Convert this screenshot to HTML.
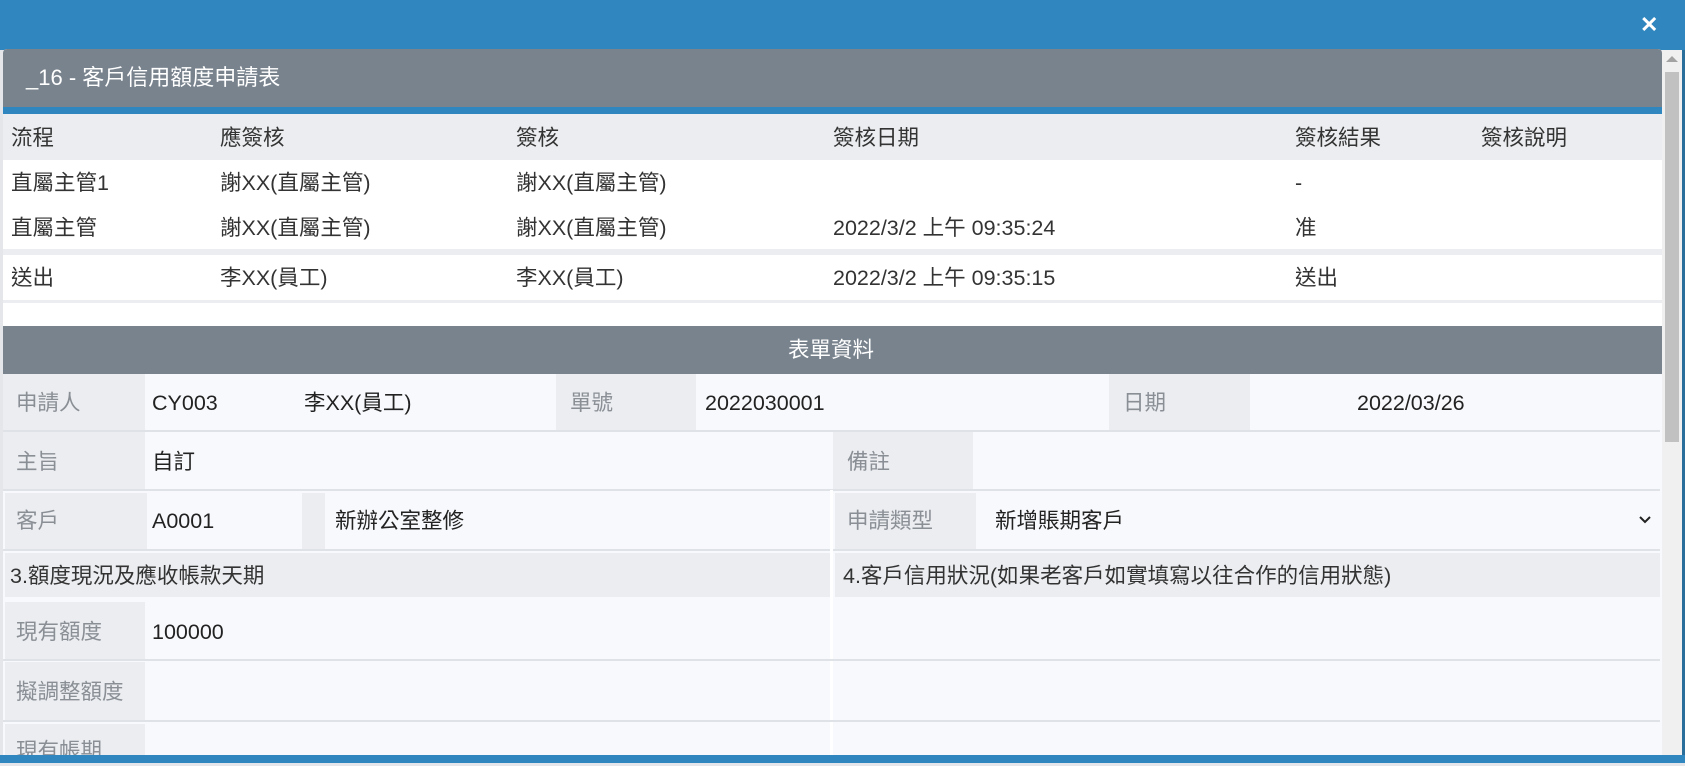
<!DOCTYPE html>
<html><head><meta charset="utf-8"><style>
*{margin:0;padding:0;box-sizing:border-box}
body{width:1685px;height:766px;overflow:hidden;background:#e4e6e9;font-family:"Liberation Sans","Noto Sans CJK TC",sans-serif;position:relative;color:#333}
.a{position:absolute}
.t{position:absolute;font-size:21.5px;line-height:24px;white-space:nowrap}
.lb{position:absolute;background:#ebedf0;color:#8a8f96}
.vl{position:absolute;background:#f8f9fc}
.ln{position:absolute;height:2px;background:#dfe2e6}
</style></head><body>
<div class="a" style="left:0;top:0;width:1685px;height:50px;background:#3086be"></div>
<div class="a" style="left:1640px;top:12px;color:#fff;font-size:22px;font-weight:bold">✕</div>
<div class="a" style="left:3px;top:49px;width:1659px;height:709px;background:#fff;border-radius:4px 4px 0 0;overflow:hidden">
</div>
<div class="a" style="left:3px;top:49px;width:1659px;height:58px;background:#78838e;border-radius:4px 4px 0 0"></div>
<div class="t" style="left:26px;top:66px;color:#fff;font-size:22px">_16 - 客戶信用額度申請表</div>
<div class="a" style="left:3px;top:107px;width:1659px;height:7px;background:#3086be"></div>
<div class="a" style="left:3px;top:114px;width:1659px;height:46px;background:#ebedf0"></div>
<div class="a" style="left:3px;top:249px;width:1659px;height:6px;background:#ebedf0"></div>
<div class="a" style="left:3px;top:300px;width:1659px;height:3px;background:#ebedf0"></div>
<div class="t" style="left:11px;top:126px">流程</div>
<div class="t" style="left:220px;top:126px">應簽核</div>
<div class="t" style="left:516px;top:126px">簽核</div>
<div class="t" style="left:833px;top:126px">簽核日期</div>
<div class="t" style="left:1295px;top:126px">簽核結果</div>
<div class="t" style="left:1481px;top:126px">簽核說明</div>
<div class="t" style="left:11px;top:171px">直屬主管1</div>
<div class="t" style="left:220px;top:171px">謝XX(直屬主管)</div>
<div class="t" style="left:516px;top:171px">謝XX(直屬主管)</div>
<div class="t" style="left:1295px;top:171px">-</div>
<div class="t" style="left:11px;top:216px">直屬主管</div>
<div class="t" style="left:220px;top:216px">謝XX(直屬主管)</div>
<div class="t" style="left:516px;top:216px">謝XX(直屬主管)</div>
<div class="t" style="left:833px;top:216px">2022/3/2 上午 09:35:24</div>
<div class="t" style="left:1295px;top:216px">准</div>
<div class="t" style="left:11px;top:266px">送出</div>
<div class="t" style="left:220px;top:266px">李XX(員工)</div>
<div class="t" style="left:516px;top:266px">李XX(員工)</div>
<div class="t" style="left:833px;top:266px">2022/3/2 上午 09:35:15</div>
<div class="t" style="left:1295px;top:266px">送出</div>
<div class="a" style="left:3px;top:326px;width:1659px;height:48px;background:#78838e"></div>
<div class="t" style="left:788px;top:338px;color:#fff">表單資料</div>
<div class="a" style="left:3px;top:374px;width:1659px;height:384px;background:#f8f9fc"></div>
<!-- row1 -->
<div class="lb" style="left:3px;top:374px;width:142px;height:56px"></div>
<div class="lb" style="left:556px;top:374px;width:140px;height:56px"></div>
<div class="lb" style="left:1109px;top:374px;width:141px;height:56px"></div>
<div class="ln" style="left:3px;top:430px;width:1657px"></div>
<div class="t" style="left:16px;top:391px;color:#8a8f96">申請人</div>
<div class="t" style="left:152px;top:391px;color:#222">CY003</div>
<div class="t" style="left:304px;top:391px;color:#222">李XX(員工)</div>
<div class="t" style="left:570px;top:391px;color:#8a8f96">單號</div>
<div class="t" style="left:705px;top:391px;color:#222">2022030001</div>
<div class="t" style="left:1123px;top:391px;color:#8a8f96">日期</div>
<div class="t" style="left:1357px;top:391px;color:#222">2022/03/26</div>
<!-- row2 -->
<div class="lb" style="left:3px;top:432px;width:142px;height:57px"></div>
<div class="lb" style="left:833px;top:432px;width:140px;height:57px"></div>
<div class="ln" style="left:3px;top:489px;width:1657px"></div>
<div class="t" style="left:16px;top:450px;color:#8a8f96">主旨</div>
<div class="t" style="left:152px;top:450px;color:#222">自訂</div>
<div class="t" style="left:847px;top:450px;color:#8a8f96">備註</div>
<!-- row3 -->
<div class="lb" style="left:5px;top:493px;width:142px;height:56px"></div>
<div class="lb" style="left:302px;top:493px;width:23px;height:56px"></div>
<div class="lb" style="left:835px;top:493px;width:141px;height:56px"></div>
<div class="ln" style="left:3px;top:549px;width:1657px"></div>
<div class="a" style="left:830px;top:490px;width:3px;height:268px;background:#fff"></div>
<div class="t" style="left:16px;top:509px;color:#8a8f96">客戶</div>
<div class="t" style="left:152px;top:509px;color:#222">A0001</div>
<div class="t" style="left:335px;top:509px;color:#222">新辦公室整修</div>
<div class="t" style="left:847px;top:509px;color:#8a8f96">申請類型</div>
<div class="t" style="left:995px;top:509px;color:#222">新增賬期客戶</div>
<svg class="a" style="left:1638px;top:515px" width="14" height="10" viewBox="0 0 14 10"><path d="M2 2 L7 7 L12 2" fill="none" stroke="#222" stroke-width="2"/></svg>
<!-- section heads -->
<div class="lb" style="left:5px;top:553px;width:825px;height:44px"></div>
<div class="lb" style="left:835px;top:553px;width:825px;height:44px"></div>
<div class="t" style="left:10px;top:564px;color:#333">3.額度現況及應收帳款天期</div>
<div class="t" style="left:843px;top:564px;color:#333">4.客戶信用狀況(如果老客戶如實填寫以往合作的信用狀態)</div>
<!-- rows -->
<div class="lb" style="left:5px;top:602px;width:140px;height:57px"></div>
<div class="ln" style="left:3px;top:659px;width:1657px"></div>
<div class="lb" style="left:5px;top:662px;width:140px;height:58px"></div>
<div class="ln" style="left:3px;top:720px;width:1657px"></div>
<div class="lb" style="left:5px;top:724px;width:140px;height:31px;overflow:hidden"><div class="t" style="left:11px;top:15px;color:#8a8f96">現有帳期</div></div>
<div class="t" style="left:16px;top:620px;color:#8a8f96">現有額度</div>
<div class="t" style="left:152px;top:620px;color:#222">100000</div>
<div class="t" style="left:16px;top:680px;color:#8a8f96">擬調整額度</div>
<div class="a" style="left:0;top:755px;width:1685px;height:8px;background:#3086be"></div>
<!-- scrollbar -->
<div class="a" style="left:1662px;top:50px;width:20px;height:705px;background:#f0f0f0"></div>
<div class="a" style="left:1665px;top:72px;width:14px;height:370px;background:#c1c1c1"></div>
<div class="a" style="left:1666px;top:56px;width:0;height:0;border-left:6px solid transparent;border-right:6px solid transparent;border-bottom:6px solid #a3a3a3"></div>
<div class="a" style="left:1682px;top:50px;width:3px;height:705px;background:#2a6e9c"></div>
</body></html>
